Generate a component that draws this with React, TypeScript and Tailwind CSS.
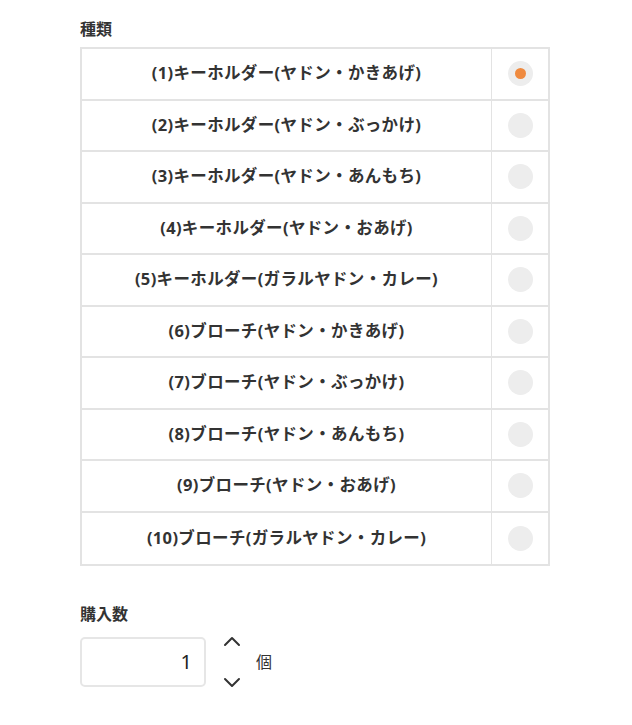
import { useState } from 'react';

const items = [
  '(1)キーホルダー(ヤドン・かきあげ)',
  '(2)キーホルダー(ヤドン・ぶっかけ)',
  '(3)キーホルダー(ヤドン・あんもち)',
  '(4)キーホルダー(ヤドン・おあげ)',
  '(5)キーホルダー(ガラルヤドン・カレー)',
  '(6)ブローチ(ヤドン・かきあげ)',
  '(7)ブローチ(ヤドン・ぶっかけ)',
  '(8)ブローチ(ヤドン・あんもち)',
  '(9)ブローチ(ヤドン・おあげ)',
  '(10)ブローチ(ガラルヤドン・カレー)',
];

function Chevron({ up }: { up?: boolean }) {
  return (
    <svg width="20" height="12" viewBox="0 0 20 12" fill="none" stroke="#333" strokeWidth="2" strokeLinecap="round" strokeLinejoin="round">
      {up ? <path d="M3 10 L10 3 L17 10" /> : <path d="M3 2 L10 9 L17 2" />}
    </svg>
  );
}

export default function App() {
  const [selected, setSelected] = useState(0);
  const [qty, setQty] = useState(1);

  return (
    <div className="min-h-screen bg-white px-20 pt-[19px] text-[#333]" style={{ fontFamily: '"Noto Sans", "Noto Sans CJK JP", sans-serif' }}>
      <div className="text-[16px] font-bold leading-5">種類</div>

      <div className="mt-[8px] w-[470px] border-2 border-[#e3e3e3]">
        {items.map((label, i) => (
          <div
            key={label}
            className={
              'flex h-[51.5px] items-center ' + (i < items.length - 1 ? 'border-b-2 border-[#e3e3e3]' : '')
            }
          >
            <div className="flex h-full flex-1 items-center justify-center border-r border-[#e3e3e3] text-[16.5px] font-bold tracking-[0.35px]">
              {label}
            </div>
            <button
              type="button"
              onClick={() => setSelected(i)}
              className="flex h-full w-[56px] items-center justify-center"
            >
              <span className="flex h-[25px] w-[25px] items-center justify-center rounded-full bg-[#ededed]">
                {selected === i && <span className="h-[11px] w-[11px] rounded-full bg-[#ef8a3f]" />}
              </span>
            </button>
          </div>
        ))}
      </div>

      <div className="mt-[38px] text-[16px] font-bold leading-5">購入数</div>

      <div className="mt-[11px] flex items-center">
        <div className="flex h-[50px] w-[126px] items-center justify-end rounded-[5px] border-2 border-[#e6e6e6] pr-[12px] text-[20px] text-[#222]">
          {qty}
        </div>
        <div className="ml-[16px] flex h-[54px] flex-col items-center justify-between">
          <button type="button" onClick={() => setQty(qty + 1)}>
            <Chevron up />
          </button>
          <button type="button" onClick={() => setQty(Math.max(1, qty - 1))}>
            <Chevron />
          </button>
        </div>
        <div className="ml-[14px] text-[16px]">個</div>
      </div>
    </div>
  );
}
